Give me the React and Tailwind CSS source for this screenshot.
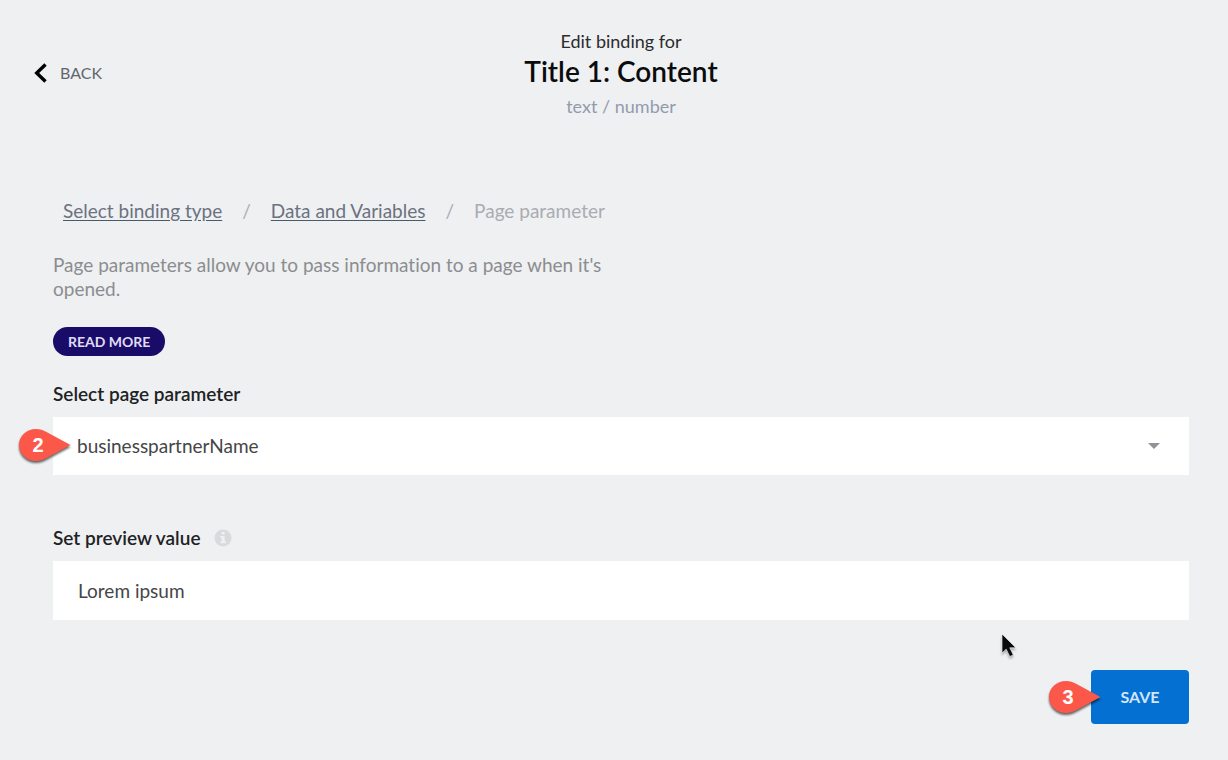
import { useState } from "react";

function Pin({ label, className }) {
  return (
    <svg
      className={`pointer-events-none absolute h-[42px] w-[58px] ${className}`}
      viewBox="0 0 58 42"
      role="img"
      aria-label={`Step ${label}`}
    >
      <path
        className="fill-[#fc584a] drop-shadow-[0_2px_1px_rgba(0,0,0,0.6)]"
        d="M19 2C9.400 2 2 9.300 2 18s7.400 16 17 16c4 0 7-1 10.500-3L53.500 18 29.500 5C26 3 23 2 19 2Z"
      />
      <text
        x="21"
        y="25"
        textAnchor="middle"
        className="fill-white font-['Liberation_Sans',sans-serif] text-[20px] font-bold"
      >
        {label}
      </text>
    </svg>
  );
}

function Breadcrumbs() {
  return (
    <nav aria-label="Breadcrumb" className="pl-[10px]">
      <ol className="flex flex-wrap items-center gap-x-5 leading-6 text-[#a9acb1]">
        <li>
          <a href="#binding-type" className="text-[#6b7280] underline decoration-[#4b5a6b] underline-offset-2">
            Select binding type
          </a>
        </li>
        <li aria-hidden="true">/</li>
        <li>
          <a href="#data" className="text-[#6b7280] underline decoration-[#4b5a6b] underline-offset-2">
            Data and Variables
          </a>
        </li>
        <li aria-hidden="true">/</li>
        <li aria-current="page">Page parameter</li>
      </ol>
    </nav>
  );
}

export default function App() {
  const [preview, setPreview] = useState("Lorem ipsum");
  return (
    <div className="relative min-h-screen bg-[#eff0f2] pb-9 font-['Lato',sans-serif] text-[19px] text-[#444648] [font-variant-ligatures:none]">
      <header className="grid grid-cols-[1fr_auto_1fr] items-center pt-7 pr-5 pl-[34px]">
        <button type="button" className="flex items-center gap-3 justify-self-start text-[16px] leading-6 text-[#62666c]">
          <svg className="h-5 w-[14px]" viewBox="0 0 14 20" fill="none" stroke="#000" strokeWidth="3.400" aria-hidden="true">
            <path d="M11.500 1.500 2.700 10l8.800 8.500" />
          </svg>
          BACK
        </button>
        <div className="text-center text-[18px]">
          <p className="leading-[26px] text-[#2b2c2e]">Edit binding for</p>
          <h1 className="text-[28px] leading-[34px] font-semibold text-[#0b0c0d]">Title 1: Content</h1>
          <p className="pt-[6px] leading-6 text-[#929bae]">text / number</p>
        </div>
      </header>

      <main className="pt-[81px] pr-[39px] pl-[53px]">
        <Breadcrumbs />
        <p className="max-w-[570px] pt-[30px] leading-6 text-[#8b8d90]">
          Page parameters allow you to pass information to a page when it's opened.
        </p>
        <button
          type="button"
          className="mt-[26px] flex h-[29px] items-center rounded-full bg-[#190c69] px-[15px] text-[14px] font-bold text-[#e0dcf3]"
        >
          READ MORE
        </button>

        <label htmlFor="parameter" className="mt-[26px] block leading-6 font-semibold text-[#202224]">
          Select page parameter
        </label>
        <div className="relative mt-[11px]">
          <select id="parameter" className="h-[58px] w-full appearance-none bg-white px-6">
            <option>businesspartnerName</option>
          </select>
          <svg className="pointer-events-none absolute top-[26px] right-[29px] h-[6px] w-3" viewBox="0 0 12 6" aria-hidden="true">
            <path fill="#909298" d="M0 0h12L6 6Z" />
          </svg>
          <Pin label="2" className="top-[10px] -left-9" />
        </div>

        <div className="mt-[51px] flex items-center gap-[14px]">
          <label htmlFor="preview" className="leading-6 font-semibold text-[#202224]">
            Set preview value
          </label>
          <svg className="h-[18px] w-[18px]" viewBox="0 0 18 18" role="img" aria-label="About preview value">
            <circle cx="9" cy="9" r="8.500" fill="#d9dadc" />
            <path fill="#eff0f3" d="M7.600 3h3v2.600h-3zM6.400 7h4.200v5.300h1.300v2H6.400v-2h1.300V9H6.400z" />
          </svg>
        </div>
        <input
          id="preview"
          type="text"
          value={preview}
          onChange={(e) => setPreview(e.target.value)}
          className="mt-[11px] block h-[59px] w-full bg-white px-[25px]"
        />

        <div className="mt-[50px] flex justify-end">
          <div className="relative">
            <button
              type="button"
              className="h-[54px] w-[98px] rounded-[4px] bg-[#0470d2] text-[16px] font-bold text-[#d3e5fa]"
            >
              SAVE
            </button>
            <Pin label="3" className="top-[9px] -left-11" />
          </div>
        </div>
      </main>

      <svg
        className="pointer-events-none absolute top-[632px] left-[1000px] h-[30px] w-[22px] drop-shadow-[0_2px_1px_rgba(0,0,0,0.3)]"
        viewBox="0 0 22 30"
        aria-hidden="true"
      >
        <path
          fill="#0a0a0a"
          stroke="#fff"
          strokeOpacity="0.600"
          strokeWidth="1"
          d="M2 2v19l4.200-3.800 3.600 7.300 3.500-1.600-3.500-7.100h6Z"
        />
      </svg>
    </div>
  );
}
